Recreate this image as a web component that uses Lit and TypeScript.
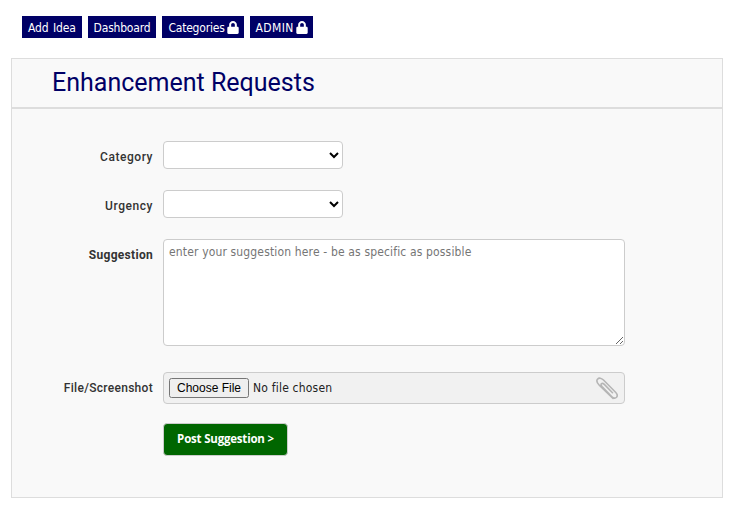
import { LitElement, html, css } from 'lit';
import { customElement } from 'lit/decorators.js';

const lock = html`<svg class="lock" viewBox="0 0 448 512" width="12" height="13"><path fill="#fff" d="M400 224h-24v-72C376 68.200 307.800 0 224 0S72 68.200 72 152v72H48c-26.500 0-48 21.500-48 48v192c0 26.500 21.500 48 48 48h352c26.500 0 48-21.500 48-48V272c0-26.500-21.500-48-48-48zm-104 0H152v-72c0-39.700 32.300-72 72-72s72 32.300 72 72v72z"/></svg>`;

@customElement('app-root')
export class AppRoot extends LitElement {
  static styles = css`
    :host {
      display: block;
      width: 740px;
      height: 518px;
      background: #fff;
      font-family: 'DejaVu Sans Condensed', 'DejaVu Sans', sans-serif;
      overflow: hidden;
    }
    .nav {
      display: flex;
      gap: 6px;
      padding: 16px 0 0 22px;
      height: 22px;
    }
    .nav a {
      box-sizing: border-box;
      display: flex;
      align-items: center;
      gap: 2px;
      height: 22px;
      padding: 2px 6px 0;
      background: #000066;
      color: #fff;
      font-size: 12px;
      letter-spacing: -0.2px;
      word-spacing: 1.6px;
      white-space: nowrap;
    }
    .nav a.caps {
      letter-spacing: 0.4px;
    }
    .lock {
      display: block;
      margin: -2px -1px 0 0;
    }
    .panel {
      box-sizing: border-box;
      width: 712px;
      height: 440px;
      margin: 20px 0 0 11px;
      border: 1px solid #ddd;
      background: #f9f9f9;
    }
    .head {
      box-sizing: border-box;
      height: 50px;
      padding: 9px 0 0 40px;
      border-bottom: 2px solid #ddd;
    }
    h1 {
      margin: 0;
      font: 400 25px/30px Roboto, sans-serif;
      color: #000066;
    }
    form {
      display: grid;
      grid-template-columns: 141px auto;
      column-gap: 10px;
      justify-content: start;
      padding-top: 32px;
    }
    label {
      font: 500 12px/16px Roboto, 'Liberation Sans', sans-serif;
      color: #333;
      text-align: right;
      padding-top: 8px;
      letter-spacing: 0.3px;
    }
    label.wide {
      letter-spacing: 0.55px;
    }
    label.strong {
      font-weight: 700;
    }
    select {
      display: block;
      box-sizing: border-box;
      width: 180px;
      height: 28px;
      margin-bottom: 21px;
      border: 1px solid #ccc;
      border-radius: 4px;
      background-color: #fff;
    }
    textarea {
      display: block;
      box-sizing: border-box;
      width: 462px;
      height: 107px;
      margin-bottom: 26px;
      padding: 4px 5px;
      border: 1px solid #ccc;
      border-radius: 4px;
      background: #fff;
      font: 12px/16px 'DejaVu Sans Condensed', 'DejaVu Sans', sans-serif;
      letter-spacing: 0.15px;
      outline: none;
    }
    textarea::placeholder {
      color: #757575;
    }
    .file {
      position: relative;
      box-sizing: border-box;
      width: 462px;
      height: 32px;
      margin-bottom: 19px;
      padding: 5px;
      border: 1px solid #ccc;
      border-radius: 4px;
      background: #f1f1f1;
    }
    .file input {
      display: block;
      width: 400px;
      font: 12px 'DejaVu Sans Condensed', 'DejaVu Sans', sans-serif;
      letter-spacing: 0.2px;
      color: #222;
    }
    .file input::file-selector-button {
      font: 12px 'Liberation Sans', sans-serif;
      letter-spacing: 0;
    }
    .clip {
      position: absolute;
      right: 6px;
      top: 3px;
    }
    button {
      box-sizing: border-box;
      width: 125px;
      height: 33px;
      padding: 0 0 2px;
      border: 1px solid #ccc;
      border-radius: 4px;
      background: #006600;
      color: #fff;
      font: 700 11.5px 'Open Sans', sans-serif;
      letter-spacing: -0.2px;
    }
  `;

  render() {
    return html`
      <nav class="nav">
        <a>Add Idea</a>
        <a>Dashboard</a>
        <a>Categories ${lock}</a>
        <a class="caps">ADMIN ${lock}</a>
      </nav>
      <section class="panel">
        <div class="head"><h1>Enhancement Requests</h1></div>
        <form>
          <label class="wide">Category</label>
          <select><option></option></select>
          <label class="wide">Urgency</label>
          <select><option></option></select>
          <label class="strong">Suggestion</label>
          <textarea placeholder="enter your suggestion here - be as specific as possible"></textarea>
          <label>File/Screenshot</label>
          <div class="file">
            <input type="file" />
            <svg class="clip" width="24" height="24" viewBox="0 0 24 24" fill="none" stroke="#b5b5b5" stroke-width="1.600" stroke-linecap="round">
              <path d="M19 22.500 5.500 9.500C3 7 2 5 3.500 3.200 5 1.500 7.300 2 9.500 4l12.300 12.500c1.700 1.800 1.800 3.500.7 4.800-1.200 1.300-3 1-4.600-.6L8 10.500C7 9.300 6.800 8.300 7.500 7.700c.7-.6 1.700-.4 2.800.7l8.200 8.300" />
            </svg>
          </div>
          <span></span>
          <button type="button">Post Suggestion &gt;</button>
        </form>
      </section>
    `;
  }
}
